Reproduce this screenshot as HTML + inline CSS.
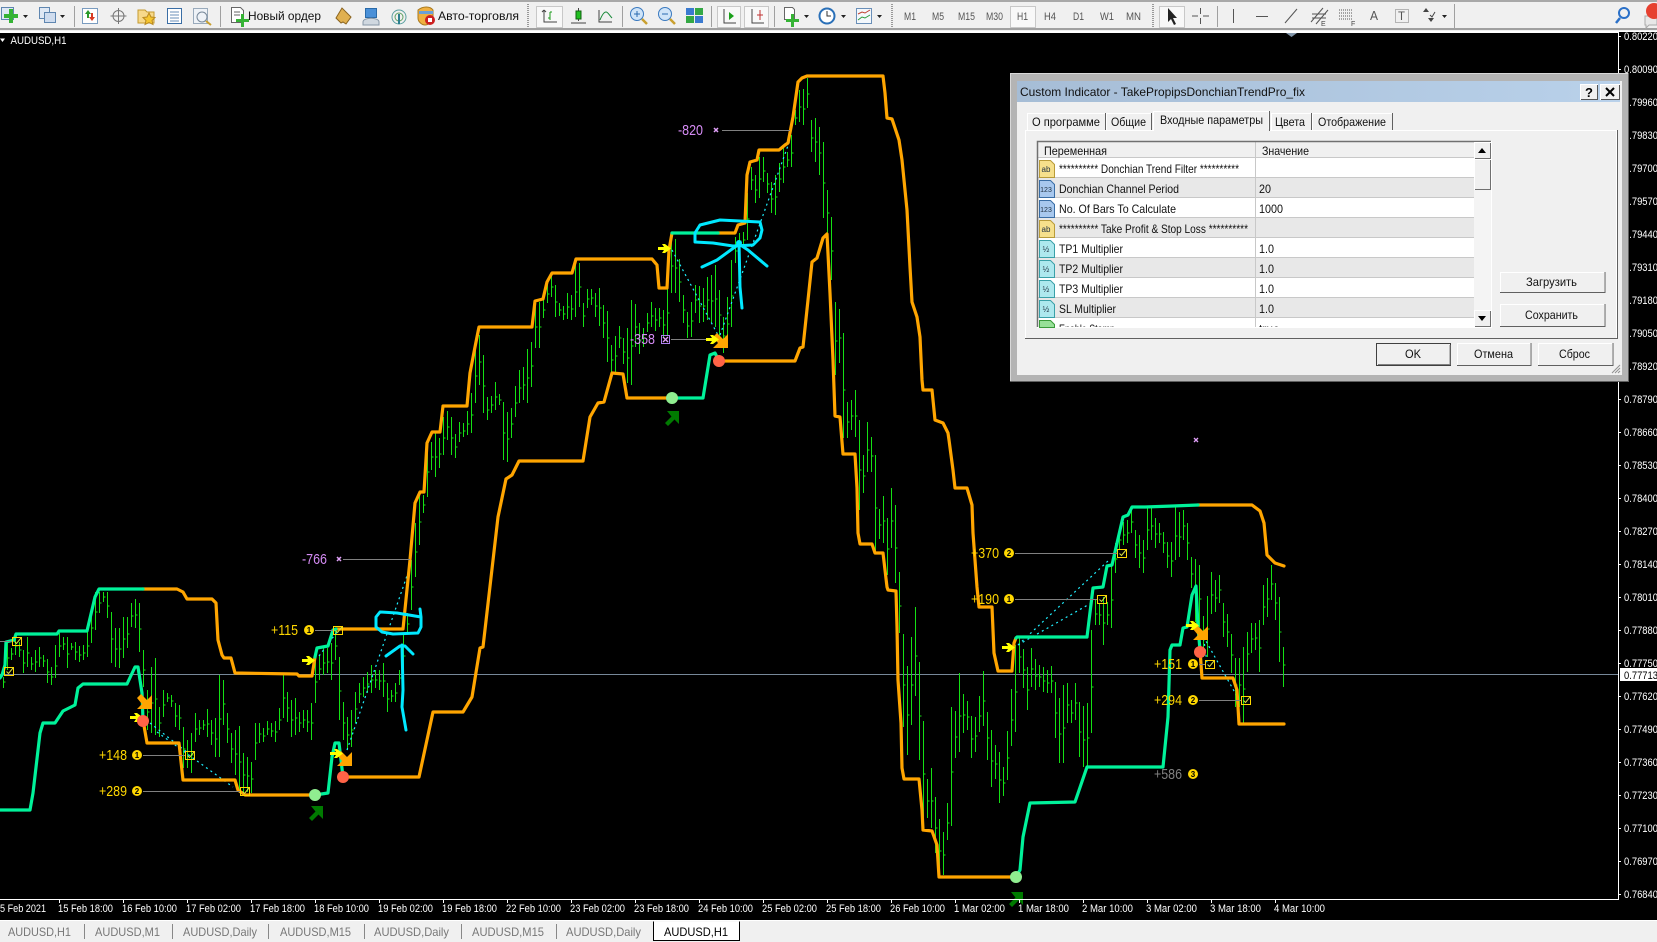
<!DOCTYPE html>
<html><head><meta charset="utf-8"><title>AUDUSD,H1</title>
<style>
html,body{margin:0;padding:0;background:#000;width:1657px;height:942px;overflow:hidden}
svg{display:block;font-family:"Liberation Sans","Noto Sans CJK SC",sans-serif}
.tb{font-size:12px;fill:#111}
.tf{font-size:11px;fill:#555}
.ax{font-size:11px;fill:#fff}
.tab{font-size:12px;fill:#777}
.d{font-size:12px;fill:#111}
.gl{font-size:15px;fill:#ffd700}
.nl{font-size:15px;fill:#d68cf5}
.n{font-size:8px;font-weight:bold;fill:#000;text-anchor:middle}
.ic{font-size:8px;fill:#234;text-anchor:middle}
</style></head><body>
<svg width="1657" height="942" viewBox="0 0 1657 942" xmlns="http://www.w3.org/2000/svg">
<defs>
<path id="ya" d="M0 3H6L4 0H7L13 4.5L7 9H4L6 6H0Z" fill="#ffff00"/>
<path id="oa" d="M15 15H0L5 10L0 4L4 0L10 6L15 1Z" fill="#ffa500"/>
<path id="ga" d="M14 0V13L9.5 8.5L3 15L0 12L6.5 5.5L2 0Z" fill="#007a00"/>
<g id="ck"><rect x=".5" y=".5" width="9" height="8" fill="none" stroke="#ffd700"/><path d="M2.5 4.5L4.5 6.5L9 1" fill="none" stroke="#d8e040"/></g>
<circle id="gc" r="5" fill="#ffd700"/>
</defs>

<!-- chart background -->
<rect x="0" y="0" width="1657" height="942" fill="#000"/>
<path d="M0 674.5H1618" stroke="#778899" stroke-width="1"/>

<!-- candles -->
<path fill="none" stroke="#14e014" stroke-width="1" d="M3.5 677V688m0-6h2M7.5 642V670m0-12h2M11.5 648V660m0-6h2M15.5 635V655m0-9h2M19.5 642V657m0-7h2M23.5 650V673m0-10h2M27.5 637V667m0-14h2M31.5 657V670m0-6h2M35.5 650V672m0-10h2M39.5 647V667m0-9h2M43.5 655V667m0-6h2M47.5 659V683m0-11h2M51.5 667V685m0-8h2M55.5 645V678m0-12h2M59.5 633V657m0-11h2M63.5 637V650m0-6h2M67.5 637V668m0-14h2M71.5 643V650m0-3h2M75.5 642V660m0-8h2M79.5 646V662m0-7h2M83.5 645V660m0-7h2M87.5 632V657m0-11h2M91.5 610V643m0-15h2M95.5 592V630m0-18h2M99.5 592V613m0-10h2M103.5 592V602m0-5h2M107.5 592V618m0-12h2M111.5 612V663m0-24h2M115.5 628V667m0-18h2M119.5 628V668m0-19h2M123.5 617V658m0-19h2M127.5 617V648m0-14h2M131.5 603V627m0-11h2M135.5 599V628m0-13h2M139.5 603V652m0-23h2M143.5 650V687m0-17h2M147.5 690V730m0-18h2M151.5 667V733m0-30h2M155.5 658V735m0-36h2M159.5 707V737m0-14h2M163.5 690V717m0-12h2M167.5 693V702m0-4h2M171.5 695V707m0-6h2M175.5 703V727m0-11h2M179.5 705V730m0-12h2M183.5 727V768m0-19h2M187.5 740V768m0-13h2M191.5 733V773m0-18h2M195.5 713V742m0-13h2M199.5 720V735m0-7h2M203.5 720V730m0-5h2M207.5 709V737m0-13h2M211.5 720V745m0-12h2M215.5 718V757m0-18h2M219.5 675V757m0-38h2M223.5 680V725m0-21h2M227.5 713V743m0-14h2M231.5 733V763m0-14h2M235.5 730V775m0-21h2M239.5 726V793m0-31h2M243.5 753V793m0-18h2M247.5 757V792m0-16h2M251.5 762V793m0-14h2M255.5 723V760m0-17h2M259.5 723V743m0-9h2M263.5 728V742m0-6h2M267.5 721V735m0-6h2M271.5 723V737m0-6h2M275.5 721V742m0-10h2M279.5 708V730m0-10h2M283.5 675V718m0-20h2M287.5 692V722m0-14h2M291.5 700V737m0-17h2M295.5 698V735m0-17h2M299.5 712V732m0-9h2M303.5 710V728m0-8h2M307.5 710V732m0-10h2M311.5 703V740m0-17h2M315.5 657V703m0-21h2M319.5 655V680m0-11h2M323.5 648V675m0-12h2M327.5 648V673m0-11h2M331.5 643V680m0-17h2M335.5 630V660m0-14h2M339.5 657V720m0-29h2M343.5 702V740m0-17h2M347.5 717V750m0-15h2M351.5 710V747m0-17h2M355.5 692V723m0-14h2M359.5 683V703m0-9h2M363.5 677V697m0-9h2M367.5 672V693m0-9h2M371.5 665V693m0-13h2M375.5 670V688m0-8h2M379.5 670V690m0-9h2M383.5 663V697m0-16h2M387.5 683V712m0-13h2M391.5 690V702m0-6h2M395.5 683V702m0-9h2M399.5 670V685m0-7h2M403.5 635V673m0-17h2M407.5 613V633m0-9h2M411.5 560V610m0-23h2M415.5 523V577m0-25h2M419.5 495V545m0-23h2M423.5 495V513m0-8h2M427.5 443V497m0-25h2M431.5 442V470m0-13h2M435.5 433V477m0-20h2M439.5 438V468m0-14h2M443.5 417V455m0-17h2M447.5 411V440m0-13h2M451.5 417V455m0-17h2M455.5 434V458m0-11h2M459.5 422V442m0-9h2M463.5 423V437m0-6h2M467.5 411V435m0-11h2M471.5 393V433m0-18h2M475.5 344V403m0-27h2M479.5 335V385m0-23h2M483.5 355V413m0-27h2M487.5 397V420m0-10h2M491.5 396V413m0-8h2M495.5 382V410m0-13h2M499.5 394V405m0-5h2M503.5 402V460m0-27h2M507.5 412V462m0-23h2M511.5 408V438m0-14h2M515.5 386V417m0-14h2M519.5 370V403m0-15h2M523.5 367V400m0-15h2M527.5 349V403m0-25h2M531.5 342V387m0-21h2M535.5 302V348m0-21h2M539.5 302V348m0-21h2M543.5 300V318m0-8h2M547.5 283V303m0-9h2M551.5 276V297m0-10h2M555.5 285V317m0-15h2M559.5 303V316m0-6h2M563.5 306V320m0-6h2M567.5 293V319m0-12h2M571.5 295V320m0-11h2M575.5 263V317m0-25h2M579.5 263V307m0-20h2M583.5 303V327m0-11h2M587.5 289V308m0-9h2M591.5 289V305m0-7h2M595.5 293V317m0-11h2M599.5 288V326m0-18h2M603.5 305V338m0-15h2M607.5 311V362m0-24h2M611.5 345V372m0-12h2M615.5 336V373m0-17h2M619.5 326V348m0-10h2M623.5 338V364m0-12h2M627.5 328V383m0-25h2M631.5 300V385m0-39h2M635.5 304V347m0-20h2M639.5 323V354m0-14h2M643.5 328V347m0-9h2M647.5 313V332m0-9h2M651.5 302V327m0-11h2M655.5 308V331m0-11h2M659.5 308V327m0-9h2M663.5 310V337m0-12h2M667.5 287V335m0-22h2M671.5 233V293m0-27h2M675.5 239V293m0-25h2M679.5 259V302m0-20h2M683.5 295V323m0-13h2M687.5 312V338m0-12h2M691.5 302V337m0-16h2M695.5 285V313m0-13h2M699.5 286V323m0-17h2M703.5 288V322m0-16h2M707.5 277V320m0-20h2M711.5 275V323m0-22h2M715.5 265V327m0-28h2M719.5 290V337m0-22h2M723.5 317V353m0-17h2M727.5 297V347m0-23h2M731.5 260V327m0-31h2M735.5 237V263m0-12h2M739.5 233V247m0-6h2M743.5 232V247m0-7h2M747.5 193V240m0-21h2M751.5 167V190m0-10h2M755.5 175V203m0-13h2M759.5 157V198m0-19h2M763.5 157V182m0-11h2M767.5 173V193m0-9h2M771.5 182V213m0-14h2M775.5 175V215m0-18h2M779.5 163V192m0-13h2M783.5 148V183m0-16h2M787.5 152V167m0-7h2M791.5 135V167m0-14h2M795.5 110V125m0-7h2M799.5 90V122m0-15h2M803.5 89V125m0-16h2M807.5 78V108m0-14h2M811.5 120V152m0-14h2M815.5 118V162m0-20h2M819.5 127V175m0-22h2M823.5 142V218m0-35h2M827.5 190V233m0-20h2M831.5 217V280m0-29h2M835.5 302V375m0-34h2M839.5 309V363m0-25h2M843.5 333V438m0-48h2M847.5 402V438m0-16h2M851.5 400V430m0-14h2M855.5 390V437m0-21h2M859.5 420V510m0-40h2M863.5 455V493m0-17h2M867.5 422V472m0-22h2M871.5 437V472m0-16h2M875.5 455V552m0-44h2M879.5 509V539m0-14h2M883.5 496V543m0-22h2M887.5 518V575m0-26h2M891.5 488V548m0-27h2M895.5 505V583m0-35h2M899.5 572V633m0-27h2M903.5 634V727m0-42h2M907.5 666V755m0-40h2M911.5 637V725m0-40h2M915.5 607V696m0-40h2M919.5 662V760m0-44h2M923.5 721V817m0-43h2M927.5 779V818m0-17h2M931.5 768V828m0-27h2M935.5 797V853m0-25h2M939.5 819V877m0-26h2M943.5 832V875m0-20h2M947.5 803V840m0-17h2M951.5 707V826m0-54h2M955.5 711V758m0-21h2M959.5 673V752m0-36h2M963.5 694V733m0-18h2M967.5 701V730m0-13h2M971.5 716V758m0-19h2M975.5 717V752m0-16h2M979.5 696V732m0-16h2M983.5 671V726m0-25h2M987.5 712V760m0-22h2M991.5 730V787m0-26h2M995.5 745V779m0-15h2M999.5 752V803m0-23h2M1003.5 767V796m0-13h2M1007.5 731V780m0-22h2M1011.5 689V746m0-26h2M1015.5 645V732m0-40h2M1019.5 638V673m0-16h2M1023.5 649V688m0-18h2M1027.5 667V710m0-20h2M1031.5 648V687m0-18h2M1035.5 659V690m0-14h2M1039.5 665V687m0-10h2M1043.5 667V692m0-11h2M1047.5 670V693m0-10h2M1051.5 666V693m0-12h2M1055.5 682V738m0-25h2M1059.5 698V763m0-29h2M1063.5 685V763m0-35h2M1067.5 683V723m0-18h2M1071.5 700V723m0-10h2M1075.5 683V720m0-17h2M1079.5 702V757m0-25h2M1083.5 706V767m0-27h2M1087.5 703V767m0-29h2M1091.5 630V733m0-46h2M1095.5 600V625m0-11h2M1099.5 603V625m0-10h2M1103.5 597V645m0-22h2M1107.5 602V625m0-10h2M1111.5 565V628m0-28h2M1115.5 543V573m0-14h2M1119.5 528V550m0-10h2M1123.5 522V545m0-10h2M1127.5 520V543m0-10h2M1131.5 508V533m0-11h2M1135.5 530V558m0-13h2M1139.5 535V568m0-15h2M1143.5 540V573m0-15h2M1147.5 507V550m0-20h2M1151.5 508V540m0-14h2M1155.5 518V548m0-14h2M1159.5 523V543m0-9h2M1163.5 532V553m0-10h2M1167.5 542V568m0-12h2M1171.5 542V577m0-16h2M1175.5 507V560m0-24h2M1179.5 512V557m0-20h2M1183.5 510V540m0-14h2M1187.5 523V560m0-17h2M1191.5 557V588m0-14h2M1195.5 559V622m0-28h2M1199.5 565V627m0-28h2M1203.5 616V657m0-19h2M1207.5 596V657m0-28h2M1211.5 572V614m0-19h2M1215.5 580V612m0-14h2M1219.5 575V603m0-13h2M1223.5 603V637m0-15h2M1227.5 614V647m0-15h2M1231.5 634V673m0-18h2M1235.5 658V707m0-22h2M1239.5 658V707m0-22h2M1243.5 647V723m0-34h2M1247.5 632V672m0-18h2M1251.5 623V653m0-14h2M1255.5 623V650m0-12h2M1259.5 620V672m0-24h2M1263.5 585V625m0-18h2M1267.5 578V617m0-18h2M1271.5 565V600m0-16h2M1275.5 583V620m0-17h2M1279.5 597V662m0-30h2M1283.5 647V687m0-22h2"/>

<!-- dotted lines -->
<path fill="none" stroke="#20f0ff" stroke-width="1.2" stroke-dasharray="2 3.500" d="M150 723L188 753M157 732L233 787M347 750L410 567M319 656L340 628M672 250L718 335M720 335L790 140M1018 645L1093 602M1018 645L1108 561M1198 627L1238 698M1203 633L1207 663"/>

<!-- channel lines -->
<g fill="none" stroke-width="3.2" stroke-linejoin="round" stroke-linecap="round">
<path stroke="#ffa500" d="M143 589L177 589L183 592L187 599L212 599L216 603L218 640L222 655L224 658L231 658L235 673L297 674L299 676L312 676L315 657M336 629L403 629L410 560L415 503L420 492L424 492L427 443L432 432L440 432L443 406L467 406L470 373L475 347L479 327L532 327L535 301L543 299L547 282L552 273L572 273L576 259L652 259L657 265L659 288L667 288L669 250L672 233M718 233L735 233L738 225L745 223L747 175L750 162L757 160L759 150L779 150L785 145L788 143L793 117L798 82L802 78L807 76L883 76L885 93L887 118L892 119L899 140L902 160L907 210L910 267L912 302L917 317L920 337L922 380L923 390L932 390L935 420L943 423L948 433L949 440L953 470L955 488L967 488L972 505L973 533L977 587L979 607L992 607L994 653L998 671L1012 671L1014 643L1016 638M1198 505L1252 505L1260 511L1264 523L1267 555L1275 563L1284 566M143 720L147 743L179 743L183 780L235 780L238 790L245 795L315 795M343 777L419 777L433 712L463 712L472 697L480 648L483 647L498 517L506 479L512 475L519 461L583 461L590 417L598 403L604 402L612 373L623 374L627 398L672 398M719 361L795 361L800 348L803 347L808 300L812 262L817 258L823 238L827 234L830 293L833 360L835 416L840 417L843 454L855 454L857 488L858 533L860 544L872 544L875 553L883 553L887 587L888 590L896 591L897 627L898 680L901 723L902 768L904 779L919 779L922 810L923 830L932 831L937 845L939 877L1016 877M1200 650L1202 678L1233 678L1237 690L1239 724L1284 724"/>
<path stroke="#00f29a" d="M0 678L2 675L5 665L6 642L14 640L16 634L57 634L59 631L87 631L95 597L99 589L143 589M315 657L317 648L328 646L333 630L336 629M672 233L718 233M1016 638L1017 637L1087 637L1093 588L1103 587L1107 566L1112 565L1123 517L1128 515L1132 507L1145 507L1173 506L1198 505M0 810L30 810L33 793L40 733L43 723L55 723L63 711L75 705L78 688L83 684L127 684L135 667L138 667L142 693L143 720M315 795L328 793L332 757L335 743L339 743L343 777M672 398L703 398L710 355L715 353L719 361M1016 877L1020 870L1023 837L1030 803L1075 802L1087 767L1163 767L1168 717L1170 650L1172 645L1180 645L1183 628L1187 627L1192 595L1196 586L1198 627L1200 650"/>
</g>

<!-- hand drawn cyan -->
<g fill="none" stroke="#00e8ff" stroke-width="3" stroke-linecap="round" stroke-linejoin="round">
<path d="M420 609L421 617L397 613L380 612L376 617L376 627L382 632L393 634L418 633L421 627L421 617"/>
<path d="M406 730L402 707L403 690L402 645M386 656L400 646L405 646L413 654"/>
<path d="M760 222L720 220L700 225L695 233L695 242L713 243L733 246L753 245L760 238L762 230L760 222"/>
<path d="M739 242L740 287L742 308M702 267L717 260L739 244L748 250L767 266"/>
</g>
<circle cx="739" cy="243" r="3" fill="#00e8ff"/>

<!-- gray leader lines -->
<path stroke="#808080" stroke-width="1" d="M0 641.5H12M315 630.5H333M143 755.5H185M143 791.5H240M722 130.5H790M671 339.5H706M343 559.5H410M1015 553.5H1117M1015 599.5H1097M1199 664.5H1205M1199 700.5H1241"/>

<!-- arrows and dots -->
<use href="#oa" x="137" y="694"/><use href="#ya" x="130" y="713"/>
<circle cx="143" cy="721" r="6" fill="#ff6347"/>
<use href="#ya" x="302" y="656"/>
<use href="#oa" x="337" y="751"/><use href="#ya" x="330" y="749"/>
<circle cx="343" cy="777" r="6" fill="#ff6347"/>
<circle cx="315" cy="795" r="6" fill="#90ee90"/><use href="#ga" x="309" y="806"/>
<use href="#ya" x="658" y="244"/>
<use href="#oa" x="713" y="333"/><use href="#ya" x="706" y="335"/>
<circle cx="719" cy="361" r="6" fill="#ff6347"/>
<circle cx="672" cy="398" r="6" fill="#90ee90"/><use href="#ga" x="665" y="411"/>
<use href="#ya" x="1002" y="643"/>
<use href="#oa" x="1193" y="625"/><use href="#ya" x="1186" y="621"/>
<circle cx="1200" cy="652" r="6" fill="#ff6347"/>
<circle cx="1016" cy="877" r="6" fill="#90ee90"/><use href="#ga" x="1009" y="892"/>

<!-- check boxes -->
<use href="#ck" x="12" y="637"/><use href="#ck" x="4" y="667"/><use href="#ck" x="333" y="626"/><use href="#ck" x="185" y="751"/><use href="#ck" x="240" y="787"/><use href="#ck" x="1117" y="549"/><use href="#ck" x="1097" y="595"/><use href="#ck" x="1205" y="660"/><use href="#ck" x="1241" y="696"/>

<!-- labels -->
<text class="gl" x="271" y="635" textLength="27" lengthAdjust="spacingAndGlyphs">+115</text><use href="#gc" x="309" y="630"/><text class="n" x="309" y="633">1</text>
<text class="gl" x="99" y="760" textLength="28" lengthAdjust="spacingAndGlyphs">+148</text><use href="#gc" x="137" y="755"/><text class="n" x="137" y="758">1</text>
<text class="gl" x="99" y="796" textLength="28" lengthAdjust="spacingAndGlyphs">+289</text><use href="#gc" x="137" y="791"/><text class="n" x="137" y="794">2</text>
<text class="gl" x="971" y="558" textLength="28" lengthAdjust="spacingAndGlyphs">+370</text><use href="#gc" x="1009" y="553"/><text class="n" x="1009" y="556">2</text>
<text class="gl" x="971" y="604" textLength="28" lengthAdjust="spacingAndGlyphs">+190</text><use href="#gc" x="1009" y="599"/><text class="n" x="1009" y="602">1</text>
<text class="gl" x="1154" y="669" textLength="28" lengthAdjust="spacingAndGlyphs">+151</text><use href="#gc" x="1193" y="664"/><text class="n" x="1193" y="667">1</text>
<text class="gl" x="1154" y="705" textLength="28" lengthAdjust="spacingAndGlyphs">+294</text><use href="#gc" x="1193" y="700"/><text class="n" x="1193" y="703">2</text>
<text class="gl" style="fill:#808080" x="1154" y="779" textLength="28" lengthAdjust="spacingAndGlyphs">+586</text><use href="#gc" x="1193" y="774"/><text class="n" x="1193" y="777">3</text>
<text class="nl" x="678" y="135" textLength="25" lengthAdjust="spacingAndGlyphs">-820</text><path d="M714 128l4 4m0-4l-4 4" stroke="#e0a0f8" stroke-width="1.5"/>
<text class="nl" x="630" y="344" textLength="25" lengthAdjust="spacingAndGlyphs">-358</text><rect x="661.500" y="335.500" width="8" height="8" fill="none" stroke="#b080f0"/><path d="M663 337l5 5m0-5l-5 5" stroke="#e0a0f8" stroke-width="1.3"/>
<text class="nl" x="302" y="564" textLength="25" lengthAdjust="spacingAndGlyphs">-766</text><path d="M337 557l4 4m0-4l-4 4" stroke="#e0a0f8" stroke-width="1.5"/>
<path d="M1194 438l4 4m0-4l-4 4" stroke="#e0a0f8" stroke-width="1.3"/>

<!-- symbol label -->
<path d="M0 38.500h5l-2.500 3.500z" fill="#fff"/>
<text x="10.500" y="44" font-size="11" fill="#fff" textLength="56" lengthAdjust="spacingAndGlyphs">AUDUSD,H1</text>

<!-- chart frame -->
<path d="M0 32.500H1618.500V899.500H0" fill="none" stroke="#fff"/>
<path d="M1286 33h11l-5.500 4z" fill="#8296aa"/>

<!-- price axis -->
<path stroke="#fff" d="M1618 36.500h3M1618 69.500h3M1618 102.500h3M1618 135.500h3M1618 168.500h3M1618 201.500h3M1618 234.500h3M1618 267.500h3M1618 300.500h3M1618 333.500h3M1618 366.500h3M1618 399.500h3M1618 432.500h3M1618 465.500h3M1618 498.500h3M1618 531.500h3M1618 564.500h3M1618 597.500h3M1618 630.500h3M1618 663.500h3M1618 696.500h3M1618 729.500h3M1618 762.500h3M1618 795.500h3M1618 828.500h3M1618 861.500h3M1618 894.500h3"/>
<g class="ax">
<text class="ax" x="1624" y="40" textLength="34" lengthAdjust="spacingAndGlyphs">0.80220</text>
<text class="ax" x="1624" y="73" textLength="34" lengthAdjust="spacingAndGlyphs">0.80090</text>
<text class="ax" x="1624" y="106" textLength="34" lengthAdjust="spacingAndGlyphs">0.79960</text>
<text class="ax" x="1624" y="139" textLength="34" lengthAdjust="spacingAndGlyphs">0.79830</text>
<text class="ax" x="1624" y="172" textLength="34" lengthAdjust="spacingAndGlyphs">0.79700</text>
<text class="ax" x="1624" y="205" textLength="34" lengthAdjust="spacingAndGlyphs">0.79570</text>
<text class="ax" x="1624" y="238" textLength="34" lengthAdjust="spacingAndGlyphs">0.79440</text>
<text class="ax" x="1624" y="271" textLength="34" lengthAdjust="spacingAndGlyphs">0.79310</text>
<text class="ax" x="1624" y="304" textLength="34" lengthAdjust="spacingAndGlyphs">0.79180</text>
<text class="ax" x="1624" y="337" textLength="34" lengthAdjust="spacingAndGlyphs">0.79050</text>
<text class="ax" x="1624" y="370" textLength="34" lengthAdjust="spacingAndGlyphs">0.78920</text>
<text class="ax" x="1624" y="403" textLength="34" lengthAdjust="spacingAndGlyphs">0.78790</text>
<text class="ax" x="1624" y="436" textLength="34" lengthAdjust="spacingAndGlyphs">0.78660</text>
<text class="ax" x="1624" y="469" textLength="34" lengthAdjust="spacingAndGlyphs">0.78530</text>
<text class="ax" x="1624" y="502" textLength="34" lengthAdjust="spacingAndGlyphs">0.78400</text>
<text class="ax" x="1624" y="535" textLength="34" lengthAdjust="spacingAndGlyphs">0.78270</text>
<text class="ax" x="1624" y="568" textLength="34" lengthAdjust="spacingAndGlyphs">0.78140</text>
<text class="ax" x="1624" y="601" textLength="34" lengthAdjust="spacingAndGlyphs">0.78010</text>
<text class="ax" x="1624" y="634" textLength="34" lengthAdjust="spacingAndGlyphs">0.77880</text>
<text class="ax" x="1624" y="667" textLength="34" lengthAdjust="spacingAndGlyphs">0.77750</text>
<text class="ax" x="1624" y="700" textLength="34" lengthAdjust="spacingAndGlyphs">0.77620</text>
<text class="ax" x="1624" y="733" textLength="34" lengthAdjust="spacingAndGlyphs">0.77490</text>
<text class="ax" x="1624" y="766" textLength="34" lengthAdjust="spacingAndGlyphs">0.77360</text>
<text class="ax" x="1624" y="799" textLength="34" lengthAdjust="spacingAndGlyphs">0.77230</text>
<text class="ax" x="1624" y="832" textLength="34" lengthAdjust="spacingAndGlyphs">0.77100</text>
<text class="ax" x="1624" y="865" textLength="34" lengthAdjust="spacingAndGlyphs">0.76970</text>
<text class="ax" x="1624" y="898" textLength="34" lengthAdjust="spacingAndGlyphs">0.76840</text>
</g>
<rect x="1620" y="668" width="37" height="13" fill="#fff"/>
<text x="1624" y="679" font-size="11" fill="#000" textLength="34" lengthAdjust="spacingAndGlyphs">0.77713</text>

<!-- time axis -->
<path stroke="#fff" d="M59.500 899v4M123.500 899v4M187.500 899v4M251.500 899v4M315.500 899v4M379.500 899v4M443.500 899v4M507.500 899v4M571.500 899v4M635.500 899v4M699.500 899v4M763.500 899v4M827.500 899v4M891.500 899v4M955.500 899v4M1019.500 899v4M1083.500 899v4M1147.500 899v4M1211.500 899v4M1275.500 899v4"/>
<text class="ax" x="0" y="912" textLength="46" lengthAdjust="spacingAndGlyphs">5 Feb 2021</text>
<text class="ax" x="58" y="912" textLength="55" lengthAdjust="spacingAndGlyphs">15 Feb 18:00</text>
<text class="ax" x="122" y="912" textLength="55" lengthAdjust="spacingAndGlyphs">16 Feb 10:00</text>
<text class="ax" x="186" y="912" textLength="55" lengthAdjust="spacingAndGlyphs">17 Feb 02:00</text>
<text class="ax" x="250" y="912" textLength="55" lengthAdjust="spacingAndGlyphs">17 Feb 18:00</text>
<text class="ax" x="314" y="912" textLength="55" lengthAdjust="spacingAndGlyphs">18 Feb 10:00</text>
<text class="ax" x="378" y="912" textLength="55" lengthAdjust="spacingAndGlyphs">19 Feb 02:00</text>
<text class="ax" x="442" y="912" textLength="55" lengthAdjust="spacingAndGlyphs">19 Feb 18:00</text>
<text class="ax" x="506" y="912" textLength="55" lengthAdjust="spacingAndGlyphs">22 Feb 10:00</text>
<text class="ax" x="570" y="912" textLength="55" lengthAdjust="spacingAndGlyphs">23 Feb 02:00</text>
<text class="ax" x="634" y="912" textLength="55" lengthAdjust="spacingAndGlyphs">23 Feb 18:00</text>
<text class="ax" x="698" y="912" textLength="55" lengthAdjust="spacingAndGlyphs">24 Feb 10:00</text>
<text class="ax" x="762" y="912" textLength="55" lengthAdjust="spacingAndGlyphs">25 Feb 02:00</text>
<text class="ax" x="826" y="912" textLength="55" lengthAdjust="spacingAndGlyphs">25 Feb 18:00</text>
<text class="ax" x="890" y="912" textLength="55" lengthAdjust="spacingAndGlyphs">26 Feb 10:00</text>
<text class="ax" x="954" y="912" textLength="51" lengthAdjust="spacingAndGlyphs">1 Mar 02:00</text>
<text class="ax" x="1018" y="912" textLength="51" lengthAdjust="spacingAndGlyphs">1 Mar 18:00</text>
<text class="ax" x="1082" y="912" textLength="51" lengthAdjust="spacingAndGlyphs">2 Mar 10:00</text>
<text class="ax" x="1146" y="912" textLength="51" lengthAdjust="spacingAndGlyphs">3 Mar 02:00</text>
<text class="ax" x="1210" y="912" textLength="51" lengthAdjust="spacingAndGlyphs">3 Mar 18:00</text>
<text class="ax" x="1274" y="912" textLength="51" lengthAdjust="spacingAndGlyphs">4 Mar 10:00</text>

<!-- bottom tabs -->
<rect x="0" y="920" width="1657" height="22" fill="#f0f0f0"/>
<rect x="0" y="920" width="1657" height="1" fill="#fff"/>
<path stroke="#888" d="M84.500 924v15M172.500 924v15M268.500 924v15M364.500 924v15M461.500 924v15M556.500 924v15"/>
<text class="tab" x="8" y="936" textLength="63" lengthAdjust="spacingAndGlyphs">AUDUSD,H1</text>
<text class="tab" x="95" y="936" textLength="65" lengthAdjust="spacingAndGlyphs">AUDUSD,M1</text>
<text class="tab" x="183" y="936" textLength="74" lengthAdjust="spacingAndGlyphs">AUDUSD,Daily</text>
<text class="tab" x="280" y="936" textLength="71" lengthAdjust="spacingAndGlyphs">AUDUSD,M15</text>
<text class="tab" x="374" y="936" textLength="75" lengthAdjust="spacingAndGlyphs">AUDUSD,Daily</text>
<text class="tab" x="472" y="936" textLength="72" lengthAdjust="spacingAndGlyphs">AUDUSD,M15</text>
<text class="tab" x="566" y="936" textLength="75" lengthAdjust="spacingAndGlyphs">AUDUSD,Daily</text>
<path d="M653.500 921.500V940.500H739.500V921.500" fill="#fff" stroke="#000"/>
<text class="tab" style="fill:#000" x="664" y="936" textLength="64" lengthAdjust="spacingAndGlyphs">AUDUSD,H1</text>

<!-- toolbar -->
<rect x="0" y="0" width="1657" height="32" fill="#f0f0f0"/>
<rect x="0" y="0" width="1657" height="2" fill="#a8a8a8"/>
<rect x="0" y="28" width="1657" height="2" fill="#a0a0a0"/>
<rect x="0" y="31" width="1657" height="1" fill="#fff"/>
<path stroke="#a0a0a0" d="M74.500 6v21M220.500 6v21M622.500 6v21M711.500 6v21M774.500 6v21M1217.500 6v21M1454.500 4v24"/>
<path stroke="#999" stroke-width="2" stroke-dasharray="1 1" d="M528 4v24M892 4v24M1153 4v24"/>
<!-- drop arrows -->
<path fill="#222" d="M23 15h5l-2.500 3zM60 15h5l-2.500 3zM804 15h5l-2.500 3zM841 15h5l-2.500 3zM877 15h5l-2.500 3zM1442 15h5l-2.500 3z"/>
<!-- icons -->
<g fill="none" stroke-width="1">
<rect x="1.500" y="7.500" width="12" height="12" fill="#dfe8f4" stroke="#5f86b0"/><path d="M9 12h4v5h5v4h-5v5H9v-5H4v-4h5z" transform="translate(0 -3)" fill="#35b335" stroke="none"/>
<rect x="39.500" y="7.500" width="10" height="11" fill="#dfe8f4" stroke="#5f86b0"/><rect x="44.500" y="12.500" width="11" height="10" fill="#cfdcee" stroke="#5f86b0"/>
<rect x="82.500" y="8.500" width="15" height="15" fill="#fff" stroke="#7a9cc0"/><path d="M88 10l3 4h-2v4h-2v-4h-2z" fill="#2a9a2a" stroke="none"/><path d="M92 21l-3-4h2v-4h2v4h2z" fill="#d83a22" stroke="none"/>
<circle cx="118.500" cy="16" r="5.500" stroke="#777"/><path d="M118.500 8v16M110.500 16h16" stroke="#777"/>
<path d="M138 10h7l2 2h7v11h-16z" fill="#f7d98a" stroke="#c49a30"/><path d="M149 13l2 4 4 .5-3 3 1 4-4-2-4 2 1-4-3-3 4-.5z" fill="#f5c630" stroke="#b98a20"/>
<rect x="167.500" y="8.500" width="14" height="15" fill="#fff" stroke="#3a6ea5"/><path d="M170 12h9M170 15h9M170 18h9M170 21h9" stroke="#6a8fb8"/>
<rect x="193.500" y="8.500" width="14" height="15" fill="#eef2f7" stroke="#9ab"/><circle cx="202" cy="17" r="5" stroke="#789"/><path d="M206 21l5 4" stroke="#c9a030" stroke-width="2"/>
<path d="M231.500 7.500h9l3 3v12h-12z" fill="#fff" stroke="#666"/><path d="M234 12h6M234 15h6" stroke="#666"/><path d="M241 14h3v5h5v3h-5v5h-3v-5h-5v-3h5z" fill="#35b335" stroke="none"/>
<path d="M336 18l6-10 9 9-5 7-3-2-2 1z" fill="#e0b050" stroke="#8a6420"/>
<path d="M365.500 8.500h11v9h-11z" fill="#4a90d8" stroke="#2a6aa8"/><path d="M363 22c0-5 16-5 16 0v3h-16z" fill="#d0d8e0" stroke="#8898a8"/>
<circle cx="399" cy="17" r="7" stroke="#5aa0a0"/><circle cx="399" cy="17" r="4" stroke="#60a060"/><path d="M399 14v10" stroke="#2d7f90" stroke-width="2"/>
<path d="M418 10c5-4 12-4 15 0v8c0 4-5 7-8 7s-7-3-7-7z" fill="#f0b040" stroke="#a87a20"/><path d="M419 11h14v3h-14z" fill="#6aa0d8" stroke="none"/><circle cx="430" cy="20" r="5" fill="#cc2020"/><rect x="428" y="18" width="4" height="4" fill="#fff"/>
<rect x="536.500" y="6.500" width="26" height="21" fill="#f8f8f8" stroke="#c8c8c8"/>
<path d="M544 10v12h13M544 10l-2 2m2-2l2 2" stroke="#444"/><path d="M550 12v8M550 12h2M548 18h2" stroke="#1a9a1a"/>
<path d="M571 23h15M578.500 21V8" stroke="#444"/><rect x="576" y="11" width="5" height="8" fill="#20c020" stroke="#106010"/>
<path d="M599 10v12h13" stroke="#444"/><path d="M600 20c2-5 4-8 6-8s3 3 6 6" stroke="#1a8a3a"/>
<circle cx="637" cy="14" r="6.500" fill="#cfe4f8" stroke="#3a7ac0"/><path d="M634 14h6M637 11v6" stroke="#2a6ab0"/><path d="M642 19l5 5" stroke="#c9a030" stroke-width="2.500"/>
<circle cx="665" cy="14" r="6.500" fill="#cfe4f8" stroke="#3a7ac0"/><path d="M662 14h6" stroke="#2a6ab0"/><path d="M670 19l5 5" stroke="#c9a030" stroke-width="2.500"/>
<rect x="686" y="8" width="8" height="7" fill="#3a7ad0"/><rect x="695" y="8" width="8" height="7" fill="#34a845"/><rect x="686" y="16" width="8" height="7" fill="#34a845"/><rect x="695" y="16" width="8" height="7" fill="#3a7ad0"/>
<rect x="717.500" y="6.500" width="23" height="21" fill="#f8f8f8" stroke="#c8c8c8"/><path d="M724 9v14h12" stroke="#444"/><path d="M729 12l5 4-5 4z" fill="#1aa01a"/>
<rect x="744.500" y="6.500" width="24" height="21" fill="#f8f8f8" stroke="#c8c8c8"/><path d="M752 9v14h12" stroke="#444"/><path d="M760 10v10M757 15h6" stroke="#c03030"/>
<path d="M784.500 7.500h8l2 2v10h-10z" fill="#fff" stroke="#666"/><path d="M791 14h3v5h5v3h-5v5h-3v-5h-5v-3h5z" fill="#35b335" stroke="none"/>
<circle cx="827" cy="16" r="7.500" fill="#fff" stroke="#2a70b8" stroke-width="2"/><path d="M827 11v5h4" stroke="#333"/>
<rect x="856.500" y="8.500" width="15" height="15" fill="#f4f8fc" stroke="#6a8fb8"/><path d="M858 14l4-2 3 1 5-3" stroke="#c04030"/><path d="M858 20l4-3 3 1 5-3" stroke="#2a9a3a"/>
<rect x="1010.500" y="6.500" width="25" height="21" fill="#f8f8f8" stroke="#c8c8c8"/>
<rect x="1159.500" y="6.500" width="25" height="21" fill="#f8f8f8" stroke="#c8c8c8"/>
<path d="M1168 8l0 14 3-3 3 6 2-1-3-6h4z" fill="#222" stroke="none"/>
<path d="M1200.500 8v6M1200.500 18v6M1192 16h6M1203 16h6" stroke="#555"/>
<path d="M1233.500 9v14M1256 16.500h12M1285 23l12-14" stroke="#555"/>
<path d="M1311 22l12-14M1316 24l12-14M1312 14h14M1312 18h14" stroke="#555"/>
<path d="M1339 10h13M1339 13h13M1339 16h13M1339 19h13" stroke="#555" stroke-dasharray="1 1"/>
<rect x="1395.500" y="9.500" width="13" height="13" stroke="#777" stroke-dasharray="1 1"/>
<path d="M1426 8l3 4h-6zM1431 22l3-4h-6z" fill="#444" stroke="none"/><path d="M1435 12l-3 5-2-2" stroke="#444"/>
<circle cx="1624" cy="13" r="5" stroke="#2a70c8" stroke-width="2"/><path d="M1620 18l-4 5" stroke="#2a70c8" stroke-width="2.500"/>
<path d="M1645 16h12v9h-8l-3 3v-3h-1z" fill="#e8e8e8" stroke="#aaa"/><circle cx="1654" cy="11" r="8" fill="#e64030" stroke="none"/>
</g>
<text x="1370" y="20" font-size="13" fill="#555" textLength="8" lengthAdjust="spacingAndGlyphs">A</text>
<text x="1398" y="20" font-size="12" fill="#555" textLength="7" lengthAdjust="spacingAndGlyphs">T</text>
<text x="1321" y="26" font-size="7" fill="#444">E</text><text x="1351" y="26" font-size="7" fill="#444">F</text>
<text class="tb" x="248" y="20" textLength="73" lengthAdjust="spacingAndGlyphs">Новый ордер</text>
<text class="tb" x="438" y="20" textLength="81" lengthAdjust="spacingAndGlyphs">Авто-торговля</text>
<text class="tf" x="904" y="20" textLength="12" lengthAdjust="spacingAndGlyphs">M1</text>
<text class="tf" x="932" y="20" textLength="12" lengthAdjust="spacingAndGlyphs">M5</text>
<text class="tf" x="958" y="20" textLength="17" lengthAdjust="spacingAndGlyphs">M15</text>
<text class="tf" x="986" y="20" textLength="17" lengthAdjust="spacingAndGlyphs">M30</text>
<text class="tf" x="1017" y="20" textLength="11" lengthAdjust="spacingAndGlyphs">H1</text>
<text class="tf" x="1044" y="20" textLength="12" lengthAdjust="spacingAndGlyphs">H4</text>
<text class="tf" x="1073" y="20" textLength="11" lengthAdjust="spacingAndGlyphs">D1</text>
<text class="tf" x="1100" y="20" textLength="14" lengthAdjust="spacingAndGlyphs">W1</text>
<text class="tf" x="1126" y="20" textLength="15" lengthAdjust="spacingAndGlyphs">MN</text>

<!-- dialog -->
<rect x="1010" y="73" width="619" height="309" fill="#b4b4b4"/>
<path d="M1010.500 381.500V73.500H1628.500" fill="none" stroke="#d8d8d8"/>
<path d="M1010 381.500H1628.500V73" fill="none" stroke="#606060"/>
<rect x="1017" y="81" width="605" height="294" fill="#f0f0f0"/>
<linearGradient id="tg" x1="0" x2="1" y1="0" y2="0"><stop offset="0" stop-color="#a6bdd6"/><stop offset="1" stop-color="#b9d1ea"/></linearGradient>
<rect x="1017" y="81" width="603" height="21" fill="url(#tg)"/>
<text class="d" x="1020" y="96" textLength="285" lengthAdjust="spacingAndGlyphs">Custom Indicator - TakePropipsDonchianTrendPro_fix</text>
<rect x="1580.500" y="84.500" width="17" height="15" fill="#f0f0f0" stroke="#fff"/><path d="M1581 99.500H1597.500V85" fill="none" stroke="#555"/>
<rect x="1600.500" y="84.500" width="19" height="15" fill="#f0f0f0" stroke="#fff"/><path d="M1601 99.500H1619.500V85" fill="none" stroke="#555"/>
<text x="1585" y="97" font-size="13" font-weight="bold" fill="#000">?</text>
<path d="M1606 88l8 8m0-8l-8 8" stroke="#000" stroke-width="2"/>
<!-- panel -->
<rect x="1025.500" y="130.500" width="591" height="208" fill="#f0f0f0" stroke="#fff"/>
<path d="M1025 338.500H1617.500V130" fill="none" stroke="#606060"/>
<!-- tabs -->
<path fill="#f0f0f0" stroke="#fff" d="M1027.500 130V113.500H1105M1106.500 130V113.500H1151M1271.500 130V113.500H1311M1312.500 130V113.500H1392"/>
<path stroke="#606060" d="M1105.500 113v17M1151.500 113v17M1311.500 113v17M1392.500 113v17"/>
<path fill="#f0f0f0" stroke="#fff" d="M1153.500 131V111.500H1269V131"/>
<path stroke="#606060" d="M1269.500 111v20"/>
<rect x="1154" y="129" width="115" height="3" fill="#f0f0f0"/>
<text class="d" x="1032" y="126" textLength="68" lengthAdjust="spacingAndGlyphs">О программе</text>
<text class="d" x="1111" y="126" textLength="35" lengthAdjust="spacingAndGlyphs">Общие</text>
<text class="d" x="1160" y="124" textLength="103" lengthAdjust="spacingAndGlyphs">Входные параметры</text>
<text class="d" x="1275" y="126" textLength="30" lengthAdjust="spacingAndGlyphs">Цвета</text>
<text class="d" x="1318" y="126" textLength="68" lengthAdjust="spacingAndGlyphs">Отображение</text>
<!-- table -->
<rect x="1037" y="141" width="454" height="186" fill="#fff"/>
<rect x="1038" y="142" width="436" height="16" fill="#f0f0f0"/>
<rect x="1038" y="178" width="436" height="20" fill="#e8e8e8"/><rect x="1038" y="218" width="436" height="20" fill="#e8e8e8"/><rect x="1038" y="258" width="436" height="20" fill="#e8e8e8"/><rect x="1038" y="298" width="436" height="20" fill="#e8e8e8"/>
<path stroke="#c8c8c8" d="M1038 177.500H1474M1038 197.500H1474M1038 217.500H1474M1038 237.500H1474M1038 257.500H1474M1038 277.500H1474M1038 297.500H1474M1038 317.500H1474M1255.500 142V327M1038 157.500H1474"/>
<path d="M1037.500 327V141.500H1491" fill="none" stroke="#707070" stroke-width="1.500"/>
<path d="M1037 327.500H1491.500V141" fill="none" stroke="#fff"/>
<text class="d" x="1044" y="155" textLength="63" lengthAdjust="spacingAndGlyphs">Переменная</text>
<text class="d" x="1262" y="155" textLength="47" lengthAdjust="spacingAndGlyphs">Значение</text>
<!-- row icons -->
<g stroke-width="1" transform="translate(0 1)">
<path d="M1039.500 159.500h11l4 4v13h-15z" fill="#f6e08c" stroke="#b89b3a"/>
<path d="M1039.500 179.500h11l4 4v13h-15z" fill="#a8c8ee" stroke="#3a6ea5"/>
<path d="M1039.500 199.500h11l4 4v13h-15z" fill="#a8c8ee" stroke="#3a6ea5"/>
<path d="M1039.500 219.500h11l4 4v13h-15z" fill="#f6e08c" stroke="#b89b3a"/>
<path d="M1039.500 239.500h11l4 4v13h-15z" fill="#aee8ee" stroke="#3aa0a8"/>
<path d="M1039.500 259.500h11l4 4v13h-15z" fill="#aee8ee" stroke="#3aa0a8"/>
<path d="M1039.500 279.500h11l4 4v13h-15z" fill="#aee8ee" stroke="#3aa0a8"/>
<path d="M1039.500 299.500h11l4 4v13h-15z" fill="#aee8ee" stroke="#3aa0a8"/>
</g>
<path d="M1039.500 320.500h11l4 4v3h-15z" fill="#98e098" stroke="#3a9a3a"/>
<text class="ic" x="1046" y="172">ab</text><text class="ic" x="1046" y="192" style="font-size:7px">123</text><text class="ic" x="1046" y="212" style="font-size:7px">123</text><text class="ic" x="1046" y="232">ab</text><text class="ic" x="1046" y="252">½</text><text class="ic" x="1046" y="272">½</text><text class="ic" x="1046" y="292">½</text><text class="ic" x="1046" y="312">½</text>
<text class="d" x="1059" y="173" textLength="180" lengthAdjust="spacingAndGlyphs">********** Donchian Trend Filter **********</text>
<text class="d" x="1059" y="193" textLength="120" lengthAdjust="spacingAndGlyphs">Donchian Channel Period</text>
<text class="d" x="1059" y="213" textLength="117" lengthAdjust="spacingAndGlyphs">No. Of Bars To Calculate</text>
<text class="d" x="1059" y="233" textLength="189" lengthAdjust="spacingAndGlyphs">********** Take Profit &amp; Stop Loss **********</text>
<text class="d" x="1059" y="253" textLength="64" lengthAdjust="spacingAndGlyphs">TP1 Multiplier</text>
<text class="d" x="1059" y="273" textLength="64" lengthAdjust="spacingAndGlyphs">TP2 Multiplier</text>
<text class="d" x="1059" y="293" textLength="64" lengthAdjust="spacingAndGlyphs">TP3 Multiplier</text>
<text class="d" x="1059" y="313" textLength="57" lengthAdjust="spacingAndGlyphs">SL Multiplier</text>
<text class="d" x="1259" y="193" textLength="12" lengthAdjust="spacingAndGlyphs">20</text>
<text class="d" x="1259" y="213" textLength="24" lengthAdjust="spacingAndGlyphs">1000</text>
<text class="d" x="1259" y="253" textLength="15" lengthAdjust="spacingAndGlyphs">1.0</text>
<text class="d" x="1259" y="273" textLength="15" lengthAdjust="spacingAndGlyphs">1.0</text>
<text class="d" x="1259" y="293" textLength="15" lengthAdjust="spacingAndGlyphs">1.0</text>
<text class="d" x="1259" y="313" textLength="15" lengthAdjust="spacingAndGlyphs">1.0</text>
<svg x="1038" y="318" width="436" height="9"><text class="d" x="21" y="15" textLength="56" lengthAdjust="spacingAndGlyphs">Enable Stamp</text><text class="d" x="221" y="15">true</text></svg>
<!-- scrollbar -->
<rect x="1474" y="142" width="17" height="185" fill="#f4f4f4"/>
<rect x="1474.500" y="142.500" width="16" height="16" fill="#f0f0f0" stroke="#fff"/><path d="M1475 158.500H1490.500V143" fill="none" stroke="#707070"/><path d="M1478 153h8l-4-5z" fill="#000"/>
<rect x="1474.500" y="159.500" width="16" height="30" fill="#f0f0f0" stroke="#fff"/><path d="M1475 189.500H1490.500V160" fill="none" stroke="#707070"/>
<rect x="1474.500" y="310.500" width="16" height="16" fill="#f0f0f0" stroke="#fff"/><path d="M1475 326.500H1490.500V311" fill="none" stroke="#707070"/><path d="M1478 316h8l-4 5z" fill="#000"/>
<!-- buttons -->
<g fill="#f0f0f0" stroke="#fff">
<rect x="1500.500" y="272.500" width="104" height="20"/><rect x="1500.500" y="304.500" width="104" height="22"/>
<rect x="1457.500" y="343.500" width="73" height="22"/><rect x="1538.500" y="343.500" width="74" height="22"/>
</g>
<path fill="none" stroke="#606060" d="M1500 292.500H1605V272M1500 326.500H1605V304M1457 365.500H1531V343M1538 365.500H1613V343"/>
<rect x="1376.500" y="343.500" width="74" height="22" fill="#f0f0f0" stroke="#404040"/>
<path d="M1378 364.500H1450V345" fill="none" stroke="#808080"/>
<text class="d" x="1526" y="286" textLength="51" lengthAdjust="spacingAndGlyphs">Загрузить</text>
<text class="d" x="1525" y="319" textLength="53" lengthAdjust="spacingAndGlyphs">Сохранить</text>
<text class="d" x="1405" y="358" textLength="16" lengthAdjust="spacingAndGlyphs">OK</text>
<text class="d" x="1474" y="358" textLength="39" lengthAdjust="spacingAndGlyphs">Отмена</text>
<text class="d" x="1559" y="358" textLength="31" lengthAdjust="spacingAndGlyphs">Сброс</text>
<path stroke="#909090" d="M1612 373l8-8M1615 373l5-5M1618 373l2-2"/>
</svg>
</body></html>
